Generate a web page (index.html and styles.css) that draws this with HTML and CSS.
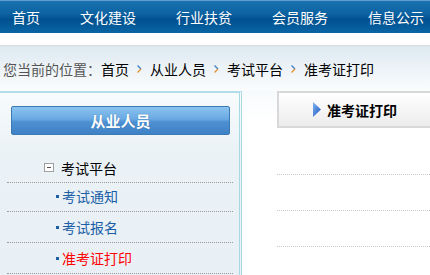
FILE: index.html
```html
<!DOCTYPE html>
<html lang="zh-CN">
<head>
    <meta charset="UTF-8">
    <meta name="viewport" content="width=device-width, initial-scale=1.0">
    <title>准考证打印</title>
    <link rel="stylesheet" href="styles.css">
</head>
<body>

    <!-- Top navigation -->
    <div class="nav">
        <ul>
            <li><a href="#">首页</a></li>
            <li><a href="#">文化建设</a></li>
            <li><a href="#">行业扶贫</a></li>
            <li><a href="#">会员服务</a></li>
            <li><a href="#">信息公示</a></li>
        </ul>
    </div>

    <!-- Breadcrumb -->
    <div class="crumb">
        <span class="crumb-label">您当前的位置：</span>
        <a href="#">首页</a>
        <span class="sep"><svg width="5" height="8" viewBox="0 0 5 8"><path d="M0.5 0.5 L4 4" stroke="#3d7cc0" stroke-width="1.3" fill="none"/><path d="M4 4 L0.5 7.5" stroke="#e0902c" stroke-width="1.3" fill="none"/></svg></span>
        <a href="#">从业人员</a>
        <span class="sep"><svg width="5" height="8" viewBox="0 0 5 8"><path d="M0.5 0.5 L4 4" stroke="#3d7cc0" stroke-width="1.3" fill="none"/><path d="M4 4 L0.5 7.5" stroke="#e0902c" stroke-width="1.3" fill="none"/></svg></span>
        <a href="#">考试平台</a>
        <span class="sep"><svg width="5" height="8" viewBox="0 0 5 8"><path d="M0.5 0.5 L4 4" stroke="#3d7cc0" stroke-width="1.3" fill="none"/><path d="M4 4 L0.5 7.5" stroke="#e0902c" stroke-width="1.3" fill="none"/></svg></span>
        <span>准考证打印</span>
    </div>

    <div class="main">
        <!-- Side menu -->
        <div class="side">
            <div class="side-title">从业人员</div>
            <div class="tree-head"><span class="fold"></span>考试平台</div>
            <ul class="tree">
                <li><a href="#">考试通知</a></li>
                <li><a href="#">考试报名</a></li>
                <li class="current"><a href="#">准考证打印</a></li>
            </ul>
        </div>

        <!-- Content -->
        <div class="content">
            <div class="tab">
                <svg class="tab-icon" width="8" height="15" viewBox="0 0 8 15">
                    <defs>
                        <linearGradient id="tri" x1="0" y1="0" x2="1" y2="1">
                            <stop offset="0" stop-color="#7fb2f0"/>
                            <stop offset="1" stop-color="#1d58c0"/>
                        </linearGradient>
                    </defs>
                    <path d="M0 0 L8 7.5 L0 15 Z" fill="url(#tri)"/>
                </svg>
                准考证打印
            </div>
            <ul class="rows">
                <li></li>
                <li></li>
                <li></li>
            </ul>
        </div>
    </div>

</body>
</html>
```

FILE: styles.css
```css
body {
    margin: 0;
    padding: 0;
    font-family: "Noto Sans CJK SC", sans-serif;
    font-size: 14px;
    color: #000;
    background-color: #fff;
    overflow: hidden;
}
a {
    text-decoration: none;
    color: inherit;
}
ul {
    list-style: none;
    margin: 0;
    padding: 0;
}

/* Navigation */
.nav {
    height: 32px;
    border-top: 1px solid #5d9dd0;
    background: linear-gradient(#1a72b0 0%, #0d63a2 40%, #00508f 58%, #0a66a6 100%);
}
.nav ul {
    display: flex;
    gap: 40px;
    padding-left: 12px;
}
.nav li {
    line-height: 32px;
    color: #fff;
    white-space: nowrap;
}

/* Breadcrumb */
.crumb {
    margin-top: 12px;
    border-top: 1px solid #d9dcdf;
    height: 45px;
    padding-left: 3px;
    white-space: nowrap;
    display: flex;
    align-items: center;
    background: linear-gradient(#dde9f1, #f6f9fb 80%, #fafcfd);
}
.crumb-label {
    color: #555;
}
.sep {
    margin: 0 8px;
}
.sep svg {
    display: block;
}

/* Main area */
.main {
    display: flex;
}
.side {
    width: 239px;
    height: 169px;
    border-top: 2px solid #b2dde8;
    border-right: 3px double #a7d9e5;
    background: linear-gradient(#f8fbfc 0, #eaf2f6 60px, #e8f0f5 100%);
    padding-top: 13px;
}
.side-title {
    margin: 0 9px 0 11px;
    height: 27px;
    line-height: 27px;
    border: 1px solid #3c7ab4;
    border-radius: 2px;
    background: linear-gradient(#89c3ef, #6aa9e2 45%, #4d90d2 55%, #3e82c6);
    color: #fff;
    font-size: 15px;
    font-weight: bold;
    text-align: center;
    text-shadow: 0 0 1px #2d6aa8;
}
.tree-head {
    margin: 18px 6px 0 7px;
    padding-left: 37px;
    height: 29px;
    border-bottom: 1px dotted #9a9a9a;
    display: flex;
    align-items: center;
}
.fold {
    position: relative;
    width: 8px;
    height: 7px;
    border: 1px solid #a0a0a0;
    background: #fff;
    margin-right: 7px;
}
.fold::after {
    content: "";
    position: absolute;
    left: 2px;
    top: 3px;
    width: 4px;
    height: 1px;
    background: #555;
}
.tree {
    margin: -2px 6px 0 7px;
}
.tree li {
    height: 30px;
    border-bottom: 1px dotted #9a9a9a;
    padding-left: 49px;
    display: flex;
    align-items: center;
    color: #1b5ea6;
}
.tree li::before {
    content: "";
    width: 3px;
    height: 3px;
    margin-right: 3px;
    background: #1b5ea6;
}
.tree li.current {
    color: #ff0000;
}

/* Content */
.content {
    flex: 1;
    padding-left: 35px;
    background: linear-gradient(#f7fafc, #fff 30px);
}
.tab {
    height: 33px;
    border: 2px solid #d8d8d8;
    border-right: none;
    background: linear-gradient(#ffffff, #f4f4f4 60%, #ececec);
    display: flex;
    align-items: center;
    padding-left: 34px;
    font-weight: bold;
    white-space: nowrap;
}
.tab-icon {
    margin-right: 6px;
}
.rows {
    padding-top: 11px;
}
.rows li {
    height: 35px;
    border-bottom: 1px dotted #c8c8c8;
}
```
